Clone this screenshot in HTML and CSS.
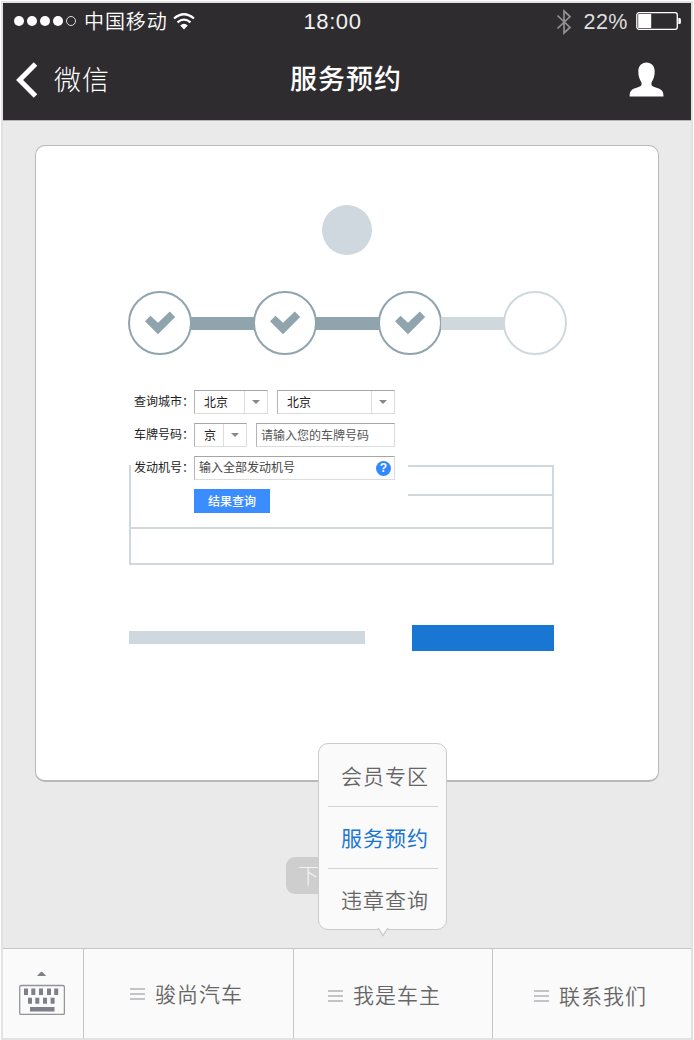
FILE: index.html
```html
<!DOCTYPE html>
<html lang="zh-CN">
<head>
<meta charset="utf-8">
<title>服务预约</title>
<link rel="stylesheet" href="styles.css">
</head>
<body>
<div class="phone">
  <header class="header">
    <div class="status">
      <div class="status-left">
        <span class="signal"><i></i><i></i><i></i><i></i><i class="empty"></i></span>
        <span class="carrier">中国移动</span>
        <svg class="wifi" width="22" height="17" viewBox="0 0 22 17" fill="none" stroke="#fff" stroke-width="2.2"><path d="M1 5.500Q11-3 21 5.500M4.500 9.300Q11 4 17.500 9.300"/><path d="M7.200 12.400Q11 9.200 14.800 12.400L11 16.600Z" fill="#fff" stroke="none"/></svg>
      </div>
      <span class="time">18:00</span>
      <div class="status-right">
        <svg class="bluetooth" width="16" height="26" viewBox="0 0 16 26" fill="none" stroke="#929194" stroke-width="1.7"><path d="M1.5 6.5L14 18.5L8 24V2L14 7.5L1.5 19.5"/></svg>
        <span class="percent">22%</span>
        <svg class="battery" width="46" height="18" viewBox="0 0 46 18"><rect x=".8" y=".7" width="40.5" height="16.6" rx="2.2" fill="none" stroke="#fff" stroke-width="1.3"/><rect x="2.2" y="2" width="13" height="14" fill="#fff"/><path d="M42.3 6h1q1.6 0 1.6 1.6v2.8q0 1.6-1.6 1.6h-1z" fill="#fff"/></svg>
      </div>
    </div>
    <div class="navbar">
      <div class="back">
        <svg width="22" height="36" viewBox="0 0 22 36" fill="none" stroke="#fff" stroke-width="5"><path d="M19.5 2L3.6 18L19.5 34"/></svg>
        <span>微信</span>
      </div>
      <h1 class="title">服务预约</h1>
      <svg class="person" width="35" height="35" viewBox="0 0 35 35" fill="#fff"><path d="M17.5.5C12.5.5 9.300 4 9.300 9.500C9.300 14 10.600 17.400 12.300 20C13 23.300 12.300 24 9 25.300C3 27.300.6 28 .6 34.400H34.500C34.500 28 32 27.300 26 25.300C22.700 24 22 23.300 22.700 20C24.400 17.400 25.700 14 25.700 9.500C25.700 4 22.500.5 17.500.5Z"/></svg>
    </div>
  </header>

  <main class="main">
    <section class="card">
      <div class="avatar"></div>
      <div class="steps">
        <div class="step done"><svg width="32" height="24" viewBox="0 0 32 24"><path d="M1 10.200L6.500 4.800L14 11.800L25.800 .6L31.200 6L14 23.200Z"/></svg></div>
        <div class="link done"></div>
        <div class="step done"><svg width="32" height="24" viewBox="0 0 32 24"><path d="M1 10.200L6.500 4.800L14 11.800L25.800 .6L31.200 6L14 23.200Z"/></svg></div>
        <div class="link done"></div>
        <div class="step done"><svg width="32" height="24" viewBox="0 0 32 24"><path d="M1 10.200L6.500 4.800L14 11.800L25.800 .6L31.200 6L14 23.200Z"/></svg></div>
        <div class="link"></div>
        <div class="step"></div>
      </div>
      <div class="table">
        <div class="table-row"></div>
        <div class="table-row"></div>
        <div class="table-row"></div>
        <form class="query">
          <div class="field">
            <label>查询城市：</label>
            <div class="select city"><span>北京</span><b></b></div>
            <div class="select district"><span>北京</span><b></b></div>
          </div>
          <div class="field">
            <label>车牌号码：</label>
            <div class="select prefix"><span>京</span><b></b></div>
            <div class="input plate">请输入您的车牌号码</div>
          </div>
          <div class="field">
            <label>发动机号：</label>
            <div class="input engine">输入全部发动机号<span class="help">?</span></div>
          </div>
          <div class="submit">结果查询</div>
        </form>
      </div>
      <div class="bottom-row">
        <div class="bar"></div>
        <div class="action"></div>
      </div>
    </section>
    <div class="next">下一步</div>
  </main>

  <nav class="tabs">
    <div class="keyboard">
      <svg width="46" height="44" viewBox="0 0 46 44" fill="#7d8088"><path d="M18 5L21.500 1.200Q22.600.4 23.700 1.200L27.200 5Z"/><rect x=".7" y="14.500" width="44.700" height="29" rx="1.500" fill="none" stroke="#92949a" stroke-width="1.300"/><path d="M5 17.500h4v6.500h-4zM12.300 17.500h4v6.500h-4zM20 17.500h4v6.500h-4zM28 17.500h4v6.500h-4zM35.200 17.500h4v6.500h-4zM9 26.800h4v6h-4zM16.300 26.800h4v6h-4zM24 26.800h4v6h-4zM31.600 26.800h4v6h-4zM11 36h24.500v4.500h-24.500z"/></svg>
    </div>
    <div class="tab first"><i class="menu-icon"></i><span>骏尚汽车</span></div>
    <div class="tab second"><i class="menu-icon"></i><span>我是车主</span>
      <div class="popup">
        <div class="popup-item">会员专区</div>
        <div class="popup-item active">服务预约</div>
        <div class="popup-item">违章查询</div>
        <svg class="arrow" width="12" height="9" viewBox="0 0 12 9"><path d="M1 0L6 7.500L11 0" fill="#fafafa" stroke="#cbcbcb" stroke-width="1.300"/></svg>
      </div>
    </div>
    <div class="tab third"><i class="menu-icon"></i><span>联系我们</span></div>
  </nav>
</div>
</body>
</html>
```
FILE: styles.css
```css
* { box-sizing: border-box; }
body {
  margin: 0;
  padding: 1px;
  background: #fff;
  font-family: "Liberation Sans", "Noto Sans CJK SC", sans-serif;
}
.phone {
  width: 692px;
  height: 1039px;
  border: 2px solid #e2e2e2;
  background: #eaeaea;
  display: flex;
  flex-direction: column;
}
.header {
  height: 118px;
  flex: none;
  background: #2e2c2f;
  border-bottom: 1px solid #b5b5b5;
  color: #fff;
}
.status {
  height: 37px;
  display: grid;
  grid-template-columns: 1fr auto 1fr;
  align-items: center;
  padding: 0 9px 0 11px;
}
.status-left, .status-right { display: flex; align-items: center; }
.status-left { height: 34px; margin-bottom: 1px; }
.status-right { justify-content: flex-end; margin-left: -26px; }
.signal { display: flex; gap: 3px; }
.signal i { width: 10px; height: 10px; border-radius: 50%; background: #fff; }
.signal .empty { background: none; border: 1px solid #ddd; }
.carrier { margin-left: 8px; padding-top: 1px; font-size: 20px; letter-spacing: .9px; line-height: 30px; font-weight: 350; }
.wifi { margin-left: 5px; }
.time { font-size: 22px; letter-spacing: .6px; color: #f2f2f2; margin: 1px 31px 0 0; }
.percent { font-size: 21.5px; letter-spacing: .5px; margin: 0 8px 0 12px; padding-top: 2px; color: #dedede; }
.bluetooth { position: relative; left: 1px; }
.battery { margin-bottom: 1px; }
.navbar {
  height: 80px;
  display: grid;
  grid-template-columns: 1fr auto 1fr;
  align-items: center;
  padding: 0 27px 1px 13px;
}
.back { display: flex; align-items: center; font-size: 27px; letter-spacing: 1px; gap: 16px; font-weight: 300; line-height: 40px; }
.back span { padding-top: 2px; }
.title { margin: 0 0 0 12px; padding-top: 1px; font-size: 27px; line-height: 40px; font-weight: 500; letter-spacing: 1px; }
.person { justify-self: end; }

.main { flex: 1; padding: 24px 32px 0; }
.card {
  height: 637px;
  border: 1px solid #b8b8b8;
  border-bottom-width: 2px;
  border-radius: 10px;
  background: #fff;
  padding: 59px 92px 0;
  display: flex;
  flex-direction: column;
}
.avatar { width: 50px; height: 50px; border-radius: 50%; background: #cfd8de; align-self: center; flex: none; }
.steps { display: flex; align-items: center; margin-top: 36px; width: 439px; flex: none; }
.step {
  flex: none;
  width: 64px;
  height: 64px;
  border: 2px solid #cfd8dc;
  border-radius: 50%;
  display: flex;
  align-items: center;
  justify-content: center;
}
.step.done { border-color: #90a4ae; }
.step svg { fill: #90a4ae; }
.link { flex: 1; height: 13px; margin: 0 -1px; background: #cfd8dc; }
.link.done { background: #90a4ae; }
.table {
  position: relative;
  width: 425px;
  height: 100px;
  flex: none;
  margin: 110px 0 0 1px;
  border: 2px solid #cfd8dc;
  display: grid;
  grid-template-rows: 29px 33px 1fr;
}
.table-row + .table-row { border-top: 2px solid #cfd8dc; margin-top: -2px; }
.query {
  position: absolute;
  left: 0;
  top: -78px;
  width: 277px;
  height: 137px;
  background: #fff;
  padding: 1px 0 0 3px;
  display: flex;
  flex-direction: column;
  gap: 9px;
  font-size: 12px;
  color: #222;
}
.field { display: flex; gap: 9px; height: 24px; line-height: 24px; }
.field label { width: 51px; white-space: nowrap; flex: none; }
.select, .input {
  border: 1px solid #dcdcdc;
  border-top-color: #a5a5a5;
  border-left-color: #b5b5b5;
  background: #fff;
}
.select { display: flex; }
.select span { flex: 1; padding-left: 9px; }
.select b { width: 23px; border-left: 1px solid #dcdcdc; display: flex; align-items: center; justify-content: center; }
.select b::before { content: ""; border: 4px solid transparent; border-top: 4px solid #888; border-bottom: 0; }
.city { width: 74px; }
.district { width: 118px; }
.prefix { width: 53px; }
.plate { width: 139px; padding-left: 4px; color: #555; }
.engine { width: 201px; padding: 0 3px 0 4px; color: #444; display: flex; justify-content: space-between; align-items: center; }
.help { width: 15px; height: 15px; border-radius: 50%; background: #3388ff; color: #fff; font-weight: 700; line-height: 15px; text-align: center; }
.submit { width: 76px; height: 24px; margin-left: 60px; background: #3b8cff; color: #fff; line-height: 26px; text-align: center; font-weight: 500; }
.bottom-row { display: flex; justify-content: space-between; align-items: flex-start; width: 425px; margin: 60px 0 0 1px; }
.bar { width: 236px; height: 13px; margin-top: 6px; background: #cfd8de; }
.action { width: 142px; height: 26px; background: #1976d2; }
.next {
  width: 122px;
  height: 37px;
  margin: 75px 0 0 251px;
  border-radius: 9px;
  background: #cecece;
  color: #f4f4f4;
  font-size: 21px;
  line-height: 37px;
  padding-left: 12px;
  font-weight: 300;
}

.tabs {
  height: 90px;
  flex: none;
  background: #fafafa;
  border-top: 1px solid #c6c6c6;
  display: grid;
  grid-template-columns: 80px 210px 199px 1fr;
}
.keyboard { padding: 22px 0 0 16px; }
.tab {
  position: relative;
  border-left: 1px solid #c6c6c6;
  display: flex;
  align-items: center;
  gap: 10px;
  font-size: 21px;
  letter-spacing: 1px;
  line-height: 30px;
  font-weight: 350;
  color: #666;
}
.tab > span { padding-top: 1px; }
.first { padding: 1px 0 0 46px; }
.second { padding: 4px 0 0 34px; }
.third { padding: 5px 0 0 41px; }
.menu-icon { width: 15px; height: 12px; border-top: 2px solid #c4c4c8; border-bottom: 2px solid #c4c4c8; display: flex; align-items: center; }
.menu-icon::before { content: ""; width: 100%; height: 2px; background: #c4c4c8; }
.popup {
  position: absolute;
  left: 24px;
  bottom: 108px;
  width: 129px;
  height: 187px;
  border: 1px solid #cbcbcb;
  border-radius: 10px;
  background: #fafafa;
  padding: 1px 8px 0 9px;
}
.popup-item { height: 62px; padding: 2px 0 0 13px; line-height: 60px; white-space: nowrap; border-bottom: 1px solid #d2d2d2; }
.popup-item:nth-child(3) { border: 0; }
.popup-item.active { color: #1976d2; font-weight: 400; }
.arrow { position: absolute; left: 58px; bottom: -8px; }
```
